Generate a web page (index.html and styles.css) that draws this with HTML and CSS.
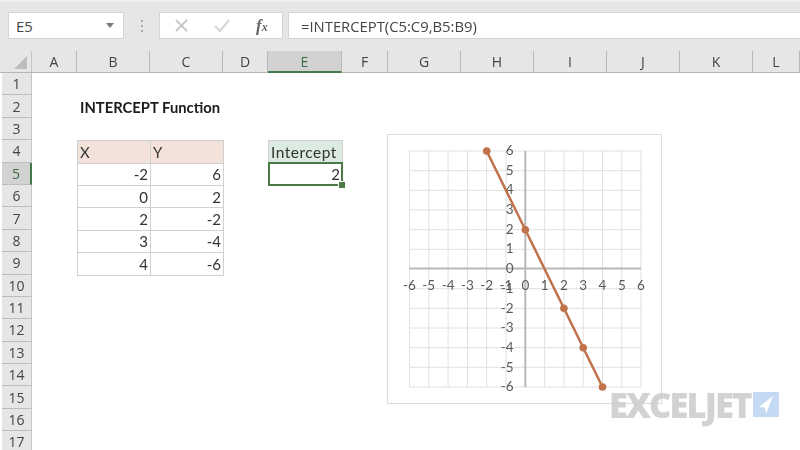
FILE: index.html
```html
<!DOCTYPE html>
<html>
<head>
  <title>INTERCEPT Function</title>
  <link rel="stylesheet" href="styles.css">
</head>
<body>
  <div class="app">
    <div class="formula-bar">
      <div class="name-box">
        <span>E5</span>
        <i class="caret"></i>
      </div>
      <div class="grip"><i></i><i></i><i></i></div>
      <div class="fx-box">
        <svg class="fx-icon" width="13" height="13" viewBox="0 0 14 14"><path d="M1 1 L13 13 M13 1 L1 13" fill="none" stroke="#c4c4c4" stroke-width="2"/></svg>
        <svg class="fx-icon" width="16" height="14" viewBox="0 0 16 14"><path d="M1 7 L6 12 L15 1" fill="none" stroke="#d8d8d8" stroke-width="2.4"/></svg>
        <span class="fx-label">f<small>x</small></span>
      </div>
      <div class="formula-input">=INTERCEPT(C5:C9,B5:B9)</div>
    </div>

    <div class="col-headers">
      <div class="corner"><i></i></div>
      <div class="col w45">A</div>
      <div class="col w73">B</div>
      <div class="col w73">C</div>
      <div class="col w45">D</div>
      <div class="col w74 active">E</div>
      <div class="col w46">F</div>
      <div class="col w73">G</div>
      <div class="col w73">H</div>
      <div class="col w73">I</div>
      <div class="col w73">J</div>
      <div class="col w73">K</div>
      <div class="col w47">L</div>
    </div>

    <div class="sheet">
      <div class="row-headers">
        <div class="row">1</div>
        <div class="row">2</div>
        <div class="row">3</div>
        <div class="row">4</div>
        <div class="row active">5</div>
        <div class="row">6</div>
        <div class="row">7</div>
        <div class="row">8</div>
        <div class="row">9</div>
        <div class="row">10</div>
        <div class="row">11</div>
        <div class="row">12</div>
        <div class="row">13</div>
        <div class="row">14</div>
        <div class="row">15</div>
        <div class="row">16</div>
        <div class="row">17</div>
      </div>

      <div class="cells">
        <div class="title">INTERCEPT Function</div>

        <div class="cell head cb r4">X</div>
        <div class="cell head cc r4">Y</div>
        <div class="cell cb r5">-2</div>
        <div class="cell cc r5">6</div>
        <div class="cell cb r6">0</div>
        <div class="cell cc r6">2</div>
        <div class="cell cb r7">2</div>
        <div class="cell cc r7">-2</div>
        <div class="cell cb r8">3</div>
        <div class="cell cc r8">-4</div>
        <div class="cell cb r9">4</div>
        <div class="cell cc r9">-6</div>

        <div class="cell result-head ce r4">Intercept</div>
        <div class="cell selected ce r5">2<i class="handle"></i></div>
      </div>
    </div>

    <div class="chart">
      <svg width="276" height="271" viewBox="387 134 276 271">
        <g class="grid">
          <path d="M409.5 151V387M428.8 151V387M448.1 151V387M467.4 151V387M486.7 151V387M506 151V387M544.6 151V387M563.9 151V387M583.2 151V387M602.5 151V387M621.8 151V387M641 151V387"/>
          <path d="M409.5 151H641M409.5 170.7H641M409.5 190.3H641M409.5 210H641M409.5 229.7H641M409.5 249.3H641M409.5 288.7H641M409.5 308.3H641M409.5 328H641M409.5 347.7H641M409.5 367.3H641M409.5 387H641"/>
        </g>
        <path class="axis" d="M525.3 151V387M409.5 268.5H641"/>
        <g class="labels x-labels">
          <text x="409.5" y="290">-6</text>
          <text x="428.8" y="290">-5</text>
          <text x="448.1" y="290">-4</text>
          <text x="467.4" y="290">-3</text>
          <text x="486.7" y="290">-2</text>
          <text x="506" y="290">-1</text>
          <text x="525.3" y="290">0</text>
          <text x="544.6" y="290">1</text>
          <text x="563.9" y="290">2</text>
          <text x="583.2" y="290">3</text>
          <text x="602.5" y="290">4</text>
          <text x="621.8" y="290">5</text>
          <text x="641" y="290">6</text>
        </g>
        <g class="labels y-labels">
          <text x="513.5" y="155">6</text>
          <text x="513.5" y="175">5</text>
          <text x="513.5" y="194">4</text>
          <text x="513.5" y="214">3</text>
          <text x="513.5" y="234">2</text>
          <text x="513.5" y="253">1</text>
          <text x="513.5" y="273">0</text>
          <text x="513.5" y="293">-1</text>
          <text x="513.5" y="313">-2</text>
          <text x="513.5" y="332">-3</text>
          <text x="513.5" y="352">-4</text>
          <text x="513.5" y="372">-5</text>
          <text x="513.5" y="391">-6</text>
        </g>
        <path class="series" d="M486.7 151L525.3 229.7L563.9 308.3L583.2 347.7L602.5 387"/>
        <g class="points">
          <circle cx="486.7" cy="151" r="3.8"/>
          <circle cx="525.3" cy="229.7" r="3.8"/>
          <circle cx="563.9" cy="308.3" r="3.8"/>
          <circle cx="583.2" cy="347.7" r="3.8"/>
          <circle cx="602.5" cy="387" r="3.8"/>
        </g>
      </svg>
    </div>

    <div class="logo">
      <span class="logo-text">EXCELJET</span>
      <svg width="26" height="25" viewBox="0 0 26 25"><rect width="26" height="25" fill="#c4daf3"/><path d="M20 4 L6 15 L12 15.5 L13 22 Z" fill="#fff"/></svg>
    </div>
  </div>
</body>
</html>
```

FILE: styles.css
```css
html, body {
  margin: 0;
  padding: 0;
  background: #fff;
  overflow: hidden;
}
.app {
  position: relative;
  width: 800px;
  height: 450px;
  overflow: hidden;
  font-family: "Open Sans", sans-serif;
  color: #444;
  filter: blur(0.45px);
}

/* formula bar */
.formula-bar {
  box-sizing: border-box;
  height: 51px;
  padding: 10px 0 12px 8px;
  display: flex;
  align-items: stretch;
  background: #e6e6e6;
  border-top: 2px solid #f0f0f0;
  font-size: 14.8px;
}
.name-box,
.fx-box,
.formula-input {
  box-sizing: border-box;
  background: #fff;
  border: 1px solid #d4d4d4;
  display: flex;
  align-items: center;
}
.name-box {
  width: 116px;
  padding: 0 8px 0 7px;
  justify-content: space-between;
}
.caret {
  width: 0;
  height: 0;
  border-left: 4px solid transparent;
  border-right: 4px solid transparent;
  border-top: 5px solid #777;
  margin-right: 1px;
}
.grip {
  width: 35px;
  display: flex;
  flex-direction: column;
  align-items: center;
  justify-content: center;
  gap: 3px;
}
.grip i {
  width: 2px;
  height: 2px;
  background: #aaa;
}
.fx-box {
  width: 124px;
  padding-left: 15px;
  gap: 26px;
}
.fx-label {
  font-family: "Liberation Serif", serif;
  font-style: italic;
  font-weight: bold;
  font-size: 17px;
  color: #666;
}
.fx-label small {
  font-size: 12px;
}
.formula-input {
  flex: 1;
  margin-left: 5px;
  padding-left: 12px;
  color: #444;
  border-right: none;
}

/* column headers */
.col-headers {
  display: flex;
  height: 22px;
  padding-left: 2px;
  background: #e6e6e6;
  border-bottom: 1px solid #b5b5b5;
  box-sizing: border-box;
  font-size: 14px;
}
.corner {
  width: 30px;
  flex: none;
  position: relative;
  border-right: 1px solid #c6c6c6;
  box-sizing: border-box;
}
.corner i {
  position: absolute;
  right: 4px;
  bottom: 3px;
  width: 0;
  height: 0;
  border-left: 13px solid transparent;
  border-bottom: 13px solid #bdbdbd;
}
.col {
  flex: none;
  box-sizing: border-box;
  display: flex;
  align-items: center;
  justify-content: center;
  border-right: 1px solid #b9b9b9;
}
.col.active {
  background: #d2d2d2;
  color: #3d6b48;
  border-bottom: 2px solid #44794e;
  height: 22px;
}
.w45 { width: 45px; }
.w46 { width: 46px; }
.w47 { width: 47px; }
.w73 { width: 73px; }
.w74 { width: 74px; }

/* sheet body */
.sheet {
  display: flex;
  padding-left: 2px;
}
.row-headers {
  width: 30px;
  flex: none;
  font-size: 14px;
}
.row {
  box-sizing: border-box;
  height: 22.4px;
  display: flex;
  align-items: center;
  justify-content: center;
  background: #e6e6e6;
  border-bottom: 1px solid #bdbdbd;
  border-right: 1px solid #c6c6c6;
}
.row.active {
  background: #d2d2d2;
  color: #3d6b48;
  border-right: 2px solid #44794e;
}

.cells {
  display: grid;
  grid-template-columns: 45px 73px 73px 45px 74px;
  grid-auto-rows: 22.4px;
  font-family: Lato, sans-serif;
  font-size: 15px;
  color: #333;
}
.title {
  grid-column: 2 / 4;
  grid-row: 2;
  align-self: center;
  padding-left: 3px;
  font-size: 14.8px;
  font-weight: bold;
  color: #1c1c1c;
  white-space: nowrap;
}
.cell {
  box-sizing: border-box;
  display: flex;
  align-items: center;
  justify-content: flex-end;
  padding-right: 2px;
  border: 1px solid #d0d0d0;
  margin: 0 -1px -1px 0;
}
.head,
.result-head {
  justify-content: flex-start;
  padding-left: 2px;
}
.head { background: #f3e2da; }
.result-head {
  background: #dcebe1;
  font-size: 15.5px;
  letter-spacing: 0.5px;
}
.cb { grid-column: 2; }
.cc { grid-column: 3; }
.ce { grid-column: 5; }
.r4 { grid-row: 4; }
.r5 { grid-row: 5; }
.r6 { grid-row: 6; }
.r7 { grid-row: 7; }
.r8 { grid-row: 8; }
.r9 { grid-row: 9; }
.selected {
  position: relative;
  border: 2px solid #4b7a45;
  margin: -1px -1px -1px 0;
  padding-right: 1px;
}
.handle {
  position: absolute;
  right: -5px;
  bottom: -5px;
  width: 6px;
  height: 6px;
  background: #4b7a45;
  border: 1px solid #fff;
}

/* chart */
.chart {
  position: absolute;
  left: 387px;
  top: 134px;
  width: 275px;
  height: 270px;
  box-sizing: border-box;
  border: 1px solid #dcdcdc;
  background: #fff;
}
.chart svg {
  display: block;
  margin: -1px;
}
.grid path {
  fill: none;
  stroke: #e0e0e0;
  stroke-width: 1;
}
.axis {
  fill: none;
  stroke: #b8b8b8;
  stroke-width: 2;
}
.labels text {
  font-family: Lato, sans-serif;
  font-size: 13.5px;
  fill: #595959;
}
.x-labels text { text-anchor: middle; }
.y-labels text { text-anchor: end; }
.series {
  fill: none;
  stroke: #c0734a;
  stroke-width: 2.5;
}
.points circle { fill: #c0734a; }

/* watermark */
.logo {
  position: absolute;
  left: 609px;
  top: 392px;
  display: flex;
  align-items: flex-start;
  gap: 2px;
}
.logo-text {
  font-family: "Open Sans", sans-serif;
  font-weight: 800;
  font-size: 34.5px;
  line-height: 25px;
  letter-spacing: -1.9px;
  color: rgba(205, 205, 205, 0.9);
}
```
